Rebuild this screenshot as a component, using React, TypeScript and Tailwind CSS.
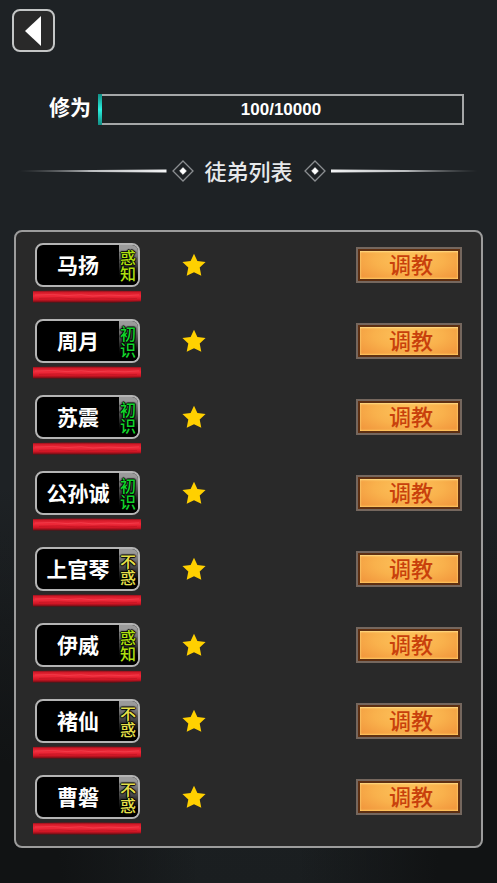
type Level = 'huozhi' | 'chushi' | 'buhuo';

interface Disciple {
  name: string;
  level: Level;
}

const disciples: Disciple[] = [
  { name: '马扬', level: 'huozhi' },
  { name: '周月', level: 'chushi' },
  { name: '苏震', level: 'chushi' },
  { name: '公孙诚', level: 'chushi' },
  { name: '上官琴', level: 'buhuo' },
  { name: '伊威', level: 'huozhi' },
  { name: '褚仙', level: 'buhuo' },
  { name: '曹磐', level: 'buhuo' },
];

const levels: Record<Level, { label: string; color: string }> = {
  huozhi: { label: '惑知', color: 'text-[#b0e010]' },
  chushi: { label: '初识', color: 'text-[#12d42b]' },
  buhuo: { label: '不惑', color: 'text-[#e6e04a]' },
};

function Diamond() {
  return (
    <svg viewBox="0 0 22 22" className="h-[22px] w-[22px] shrink-0" aria-hidden="true">
      <path d="M11 1 L21 11 L11 21 L1 11 Z" fill="none" stroke="#8b8e91" strokeWidth="1.3" />
      <path d="M11 7.6 L14.4 11 L11 14.4 L7.6 11 Z" fill="#fff" stroke="#fff" strokeWidth="0.6" />
    </svg>
  );
}

function TitleLine({ flip }: { flip?: boolean }) {
  return (
    <svg
      viewBox="0 0 148 4"
      preserveAspectRatio="none"
      className={`h-1 min-w-0 flex-1 ${flip ? '-scale-x-100' : ''}`}
      aria-hidden="true"
    >
      <defs>
        <linearGradient id="title-line" x1="0" x2="1" y1="0" y2="0">
          <stop offset="0" stopColor="#e4e6e8" stopOpacity="0" />
          <stop offset="0.5" stopColor="#e4e6e8" stopOpacity="0.8" />
          <stop offset="1" stopColor="#f4f5f6" />
        </linearGradient>
      </defs>
      <path d="M0 1.4 L148 0.4 V3.6 L0 2.6 Z" fill="url(#title-line)" />
    </svg>
  );
}

function Star() {
  return (
    <svg viewBox="0 0 24 24" className="ml-[41px] h-6 w-6 shrink-0" aria-hidden="true">
      <path
        d="M12 0.8 L15.4 8 L23.6 9.1 L17.7 14.6 L19.3 22.8 L12 19.2 L4.7 22.8 L6.3 14.6 L0.4 9.1 L8.6 8 Z"
        fill="#ffd000"
      />
    </svg>
  );
}

function HealthBar() {
  return (
    <svg viewBox="0 0 108 13" className="mt-[3px] h-[13px] w-[108px]" aria-hidden="true">
      <defs>
        <linearGradient id="health" x1="0" x2="0" y1="0" y2="1">
          <stop offset="0" stopColor="#7e0f17" />
          <stop offset="0.18" stopColor="#d81c2b" />
          <stop offset="0.45" stopColor="#f02a3a" />
          <stop offset="0.75" stopColor="#cf1524" />
          <stop offset="1" stopColor="#5a0c11" />
        </linearGradient>
      </defs>
      <path d="M0 1 L30 0.6 L62 0.4 L108 1 V11.6 L80 12.8 L40 12.4 L0 12.6 Z" fill="url(#health)" />
      <path
        d="M2 5 L20 4.4 L34 5.6 L48 4.6 L60 6 L76 5 L92 5.8 L106 4.8"
        fill="none"
        stroke="#f8505c"
        strokeOpacity="0.45"
      />
      <path
        d="M6 8.4 L26 7.8 L44 9 L70 8 L90 9 L104 8.4"
        fill="none"
        stroke="#a80d1a"
        strokeOpacity="0.35"
      />
    </svg>
  );
}

function DiscipleRow({ disciple }: { disciple: Disciple }) {
  const level = levels[disciple.level];

  return (
    <li className="flex h-[62px] items-start">
      <div className="w-[108px] shrink-0">
        <div className="mr-px ml-[2px] flex h-11 overflow-hidden rounded-lg border-2 border-[#b4b4b4] bg-black">
          <span className="flex flex-1 items-center justify-center pb-[2px] text-[21px] leading-6 font-bold whitespace-nowrap text-white">
            {disciple.name}
          </span>
          <span
            className={`flex w-[19px] items-center bg-linear-to-b from-[#9a9a9a] from-10% via-[#555555] via-40% to-black to-90% pl-px text-[16px] leading-4 font-medium break-all [text-shadow:1px_0_1px_#000,-1px_0_1px_#000,0_1px_1px_#000,0_-1px_1px_#000] ${level.color}`}
          >
            {level.label}
          </span>
        </div>
        <HealthBar />
      </div>
      <div className="flex h-11 flex-1 items-center justify-between">
        <Star />
        <button
          type="button"
          className="h-9 w-[106px] cursor-pointer border-2 border-[#75675e] bg-[#5e2f12] p-[2px]"
        >
          <span className="flex h-full items-center justify-center bg-[radial-gradient(ellipse_at_50%_30%,#fdc45c_0%,#f9b14c_50%,#f0923a_100%)] pb-1 pl-1 text-[22px] leading-6 font-medium text-[#c8400c] shadow-[inset_0_1px_2px_#ffe08a,inset_0_-1px_2px_#ffc860]">
            调教
          </span>
        </button>
      </div>
    </li>
  );
}

export default function App() {
  const current = 100;
  const total = 10000;

  return (
    <main className="min-h-screen bg-[#1e2225] bg-[radial-gradient(ellipse_40%_45%_at_0%_100%,#111314_30%,transparent),radial-gradient(ellipse_40%_45%_at_100%_100%,#111314_30%,transparent),linear-gradient(#1e2225_60%,#1a1e20)] pb-[35px] font-['Noto_Sans_CJK_SC',sans-serif]">
      <header className="px-3 pt-[9px]">
        <button
          type="button"
          aria-label="返回"
          className="flex h-[43px] w-[43px] cursor-pointer items-center justify-center rounded-lg border-2 border-[#c4c6c6] bg-[#292929] pr-px"
        >
          <svg viewBox="0 0 18 32" className="h-8 w-[18px]" aria-hidden="true">
            <path d="M17 1 V31 L1 16 Z" fill="#fff" />
          </svg>
        </button>
      </header>

      <section className="mt-[42px] flex items-center gap-[7px] pr-[33px] pl-[49px]">
        <span id="xiuwei" className="pb-[7px] text-[21px] leading-6 font-bold text-white">
          修为
        </span>
        <div
          role="progressbar"
          aria-labelledby="xiuwei"
          aria-valuenow={current}
          aria-valuemax={total}
          className="relative flex h-[31px] flex-1 items-center justify-center border-2 border-[#a5a7a8] bg-[#1d2123]"
        >
          <div
            className="absolute -inset-y-[2px] -left-[2px] min-w-1 bg-linear-to-b from-[#128f86] via-[#2af0df] to-[#128f86]"
            style={{ width: `${(current / total) * 100}%` }}
          />
          <span className="font-['Liberation_Sans',sans-serif] text-[17px] leading-5 font-bold text-white">
            {current}/{total}
          </span>
        </div>
      </section>

      <div className="mt-[30px] flex h-8 items-center gap-[5px] px-5">
        <TitleLine />
        <Diamond />
        <h1 className="px-[6px] pb-[2px] text-[22px] leading-8 font-medium text-[#e6e8ea]">徒弟列表</h1>
        <Diamond />
        <TitleLine flip />
      </div>

      <ul className="mx-[14px] mt-[43px] flex flex-col gap-[14px] rounded-lg border-2 border-[#9c9c9c] bg-[#292929] pt-[11px] pr-[19px] pb-[9px] pl-[17px]">
        {disciples.map(disciple => (
          <DiscipleRow key={disciple.name} disciple={disciple} />
        ))}
      </ul>
    </main>
  );
}
